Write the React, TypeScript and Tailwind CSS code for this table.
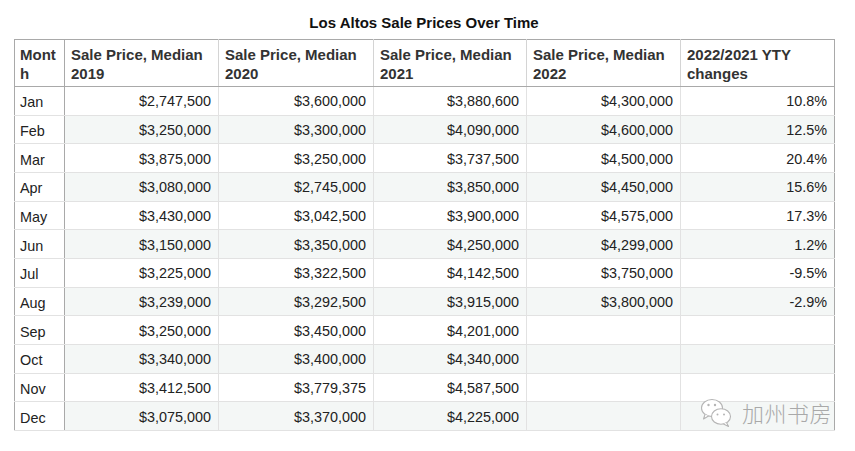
const rows: [string, string, string, string, string, string][] = [
  ["Jan", "$2,747,500", "$3,600,000", "$3,880,600", "$4,300,000", "10.8%"],
  ["Feb", "$3,250,000", "$3,300,000", "$4,090,000", "$4,600,000", "12.5%"],
  ["Mar", "$3,875,000", "$3,250,000", "$3,737,500", "$4,500,000", "20.4%"],
  ["Apr", "$3,080,000", "$2,745,000", "$3,850,000", "$4,450,000", "15.6%"],
  ["May", "$3,430,000", "$3,042,500", "$3,900,000", "$4,575,000", "17.3%"],
  ["Jun", "$3,150,000", "$3,350,000", "$4,250,000", "$4,299,000", "1.2%"],
  ["Jul", "$3,225,000", "$3,322,500", "$4,142,500", "$3,750,000", "-9.5%"],
  ["Aug", "$3,239,000", "$3,292,500", "$3,915,000", "$3,800,000", "-2.9%"],
  ["Sep", "$3,250,000", "$3,450,000", "$4,201,000", "", ""],
  ["Oct", "$3,340,000", "$3,400,000", "$4,340,000", "", ""],
  ["Nov", "$3,412,500", "$3,779,375", "$4,587,500", "", ""],
  ["Dec", "$3,075,000", "$3,370,000", "$4,225,000", "", ""],
];

const headers = [
  "Sale Price, Median 2019",
  "Sale Price, Median 2020",
  "Sale Price, Median 2021",
  "Sale Price, Median 2022",
  "2022/2021 YTY changes",
];

function WeChatMark() {
  return (
    <div className="pointer-events-none absolute bottom-[3px] right-[2px] flex items-center gap-[9px]">
      <svg width="33" height="31" viewBox="0 0 33 31" fill="none">
        <ellipse cx="12" cy="11" rx="10.5" ry="8.5" fill="#fff" stroke="#b5b5b5" strokeWidth="1.1" />
        <path d="M5 17.5 L3.5 22 L8.5 19" fill="#fff" stroke="#b5b5b5" strokeWidth="1.1" strokeLinejoin="round" />
        <circle cx="8.5" cy="8" r="1.2" fill="#b5b5b5" />
        <circle cx="15" cy="8" r="1.2" fill="#b5b5b5" />
        <ellipse cx="21" cy="19.5" rx="9.5" ry="7.8" fill="#fff" stroke="#b5b5b5" strokeWidth="1.1" />
        <path d="M26.5 25.5 L28.5 29.5 L23.5 27" fill="#fff" stroke="#b5b5b5" strokeWidth="1.1" strokeLinejoin="round" />
        <circle cx="17.5" cy="17.5" r="1" fill="#b5b5b5" />
        <circle cx="24" cy="17.5" r="1" fill="#b5b5b5" />
      </svg>
      <span
        className="text-[22px] leading-none tracking-[0.5px] text-[#a9a9a9]"
        style={{ fontFamily: '"Noto Sans CJK SC", sans-serif', fontWeight: 300 }}
      >
        加州书房
      </span>
    </div>
  );
}

export default function App() {
  return (
    <div
      className="h-[451px] w-[855px] bg-white pt-[13px] text-[#222]"
      style={{ fontFamily: '"Liberation Sans", Arial, sans-serif' }}
    >
      <div className="relative ml-[14px] w-[820px]">
        <h1 className="mb-[6px] text-center text-[15px] font-bold leading-[20px] text-[#111]">
          Los Altos Sale Prices Over Time
        </h1>
        <table className="w-full table-fixed border-collapse border border-[#a9a9a9] text-[14.4px] leading-[18px]">
          <colgroup>
            <col className="w-[50px]" />
            <col className="w-[154px]" />
            <col className="w-[155px]" />
            <col className="w-[153px]" />
            <col className="w-[154px]" />
            <col className="w-[154px]" />
          </colgroup>
          <thead>
            <tr className="h-[47px]">
              <th className="break-all border-r border-b border-[#a9a9a9] px-[5px] pt-[2px] text-left align-middle text-[15px] leading-[19px] font-bold text-[#333]">
                Month
              </th>
              {headers.map((h) => (
                <th
                  key={h}
                  className="border-r border-b border-[#a9a9a9] border-r-[#d4d4d4] px-[6px] pt-[2px] text-left align-middle text-[15px] leading-[19px] font-bold text-[#333] last:border-r-[#a9a9a9]"
                >
                  {h}
                </th>
              ))}
            </tr>
          </thead>
          <tbody>
            {rows.map((r, i) => (
              <tr key={r[0]} className="h-[28.67px]">
                <td className="border-r border-b border-[#a9a9a9] border-b-[#e2e2e2] bg-white px-[5px] pt-[3px] text-left align-middle">
                  {r[0]}
                </td>
                {r.slice(1).map((v, j) => (
                  <td
                    key={j}
                    className={
                      "border-r border-b border-[#e2e2e2] px-[7px] pt-[1px] text-right align-middle last:border-r-[#a9a9a9] " +
                      (i % 2 === 1 ? "bg-[#f4f7f6]" : "bg-white")
                    }
                  >
                    {v}
                  </td>
                ))}
              </tr>
            ))}
          </tbody>
        </table>
        <WeChatMark />
      </div>
    </div>
  );
}
